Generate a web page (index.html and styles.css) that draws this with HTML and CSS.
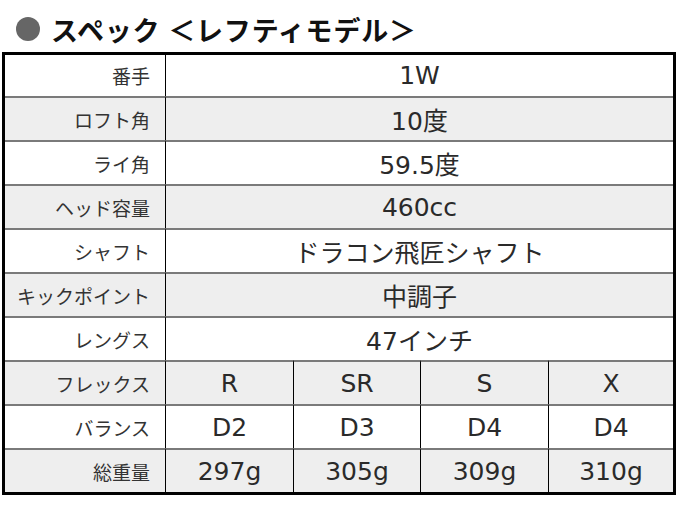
FILE: index.html
```html
<!DOCTYPE html>
<html lang="ja">
<head>
<meta charset="utf-8">
<link rel="stylesheet" href="styles.css">
</head>
<body>
<div class="title">
  <span class="dot"></span>
  <h2 class="title-text">スペック ＜レフティモデル＞</h2>
</div>
<table class="spec">
  <colgroup>
    <col class="c-label">
    <col class="c-val1">
    <col class="c-val2">
    <col class="c-val3">
    <col class="c-val4">
  </colgroup>
  <tbody>
    <tr class="first"><th>番手</th><td colspan="4">1W</td></tr>
    <tr class="alt"><th>ロフト角</th><td colspan="4">10度</td></tr>
    <tr><th>ライ角</th><td colspan="4">59.5度</td></tr>
    <tr class="alt"><th>ヘッド容量</th><td colspan="4">460cc</td></tr>
    <tr><th>シャフト</th><td colspan="4">ドラコン飛匠シャフト</td></tr>
    <tr class="alt"><th>キックポイント</th><td colspan="4">中調子</td></tr>
    <tr><th>レングス</th><td colspan="4">47インチ</td></tr>
    <tr class="alt multi"><th>フレックス</th><td>R</td><td>SR</td><td>S</td><td>X</td></tr>
    <tr class="multi"><th>バランス</th><td>D2</td><td>D3</td><td>D4</td><td>D4</td></tr>
    <tr class="alt multi"><th>総重量</th><td>297g</td><td>305g</td><td>309g</td><td>310g</td></tr>
  </tbody>
</table>
</body>
</html>
```

FILE: styles.css
```css
html, body {
  margin: 0;
  padding: 0;
  background: #fff;
}
body {
  font-family: "Noto Sans CJK JP", "Noto Sans", sans-serif;
  color: #222;
}
.title {
  display: flex;
  align-items: center;
  box-sizing: border-box;
  height: 52px;
  padding: 6px 0 0 16px;
  gap: 11px;
}
.dot {
  width: 24px;
  height: 24px;
  border-radius: 50%;
  background: #666;
  flex: none;
}
.title-text {
  margin: 0;
  font-size: 27px;
  font-weight: bold;
  color: #111;
  line-height: 1;
  letter-spacing: 0.8px;
  word-spacing: 1px;
}
.spec {
  margin-left: 2px;
  width: 674px;
  box-sizing: border-box;
  table-layout: fixed;
  border: 3px solid #000;
  border-collapse: separate;
  border-spacing: 0;
}
.c-label { width: 161px; }
.c-val1 { width: 127px; }
.c-val2 { width: 127px; }
.c-val3 { width: 128px; }
.c-val4 { width: 125px; }
.spec th, .spec td {
  box-sizing: border-box;
  height: 44px;
  padding: 0;
  border-top: 2px solid #7a7a7a;
  vertical-align: middle;
}
.spec tr.first th, .spec tr.first td {
  height: 41px;
  border-top: none;
}
.spec th {
  font-weight: normal;
  font-size: 19px;
  color: #333;
  text-align: right;
  padding-right: 15px;
  border-right: 1px solid #000;
}
.spec td {
  font-family: "DejaVu Sans", "Noto Sans CJK JP", sans-serif;
  font-size: 25px;
  text-align: center;
  color: #2a2a2a;
}
.spec tr.multi td + td {
  border-left: 1px solid #000;
}
.spec tr.alt th, .spec tr.alt td {
  background: #eeeeee;
}
```
